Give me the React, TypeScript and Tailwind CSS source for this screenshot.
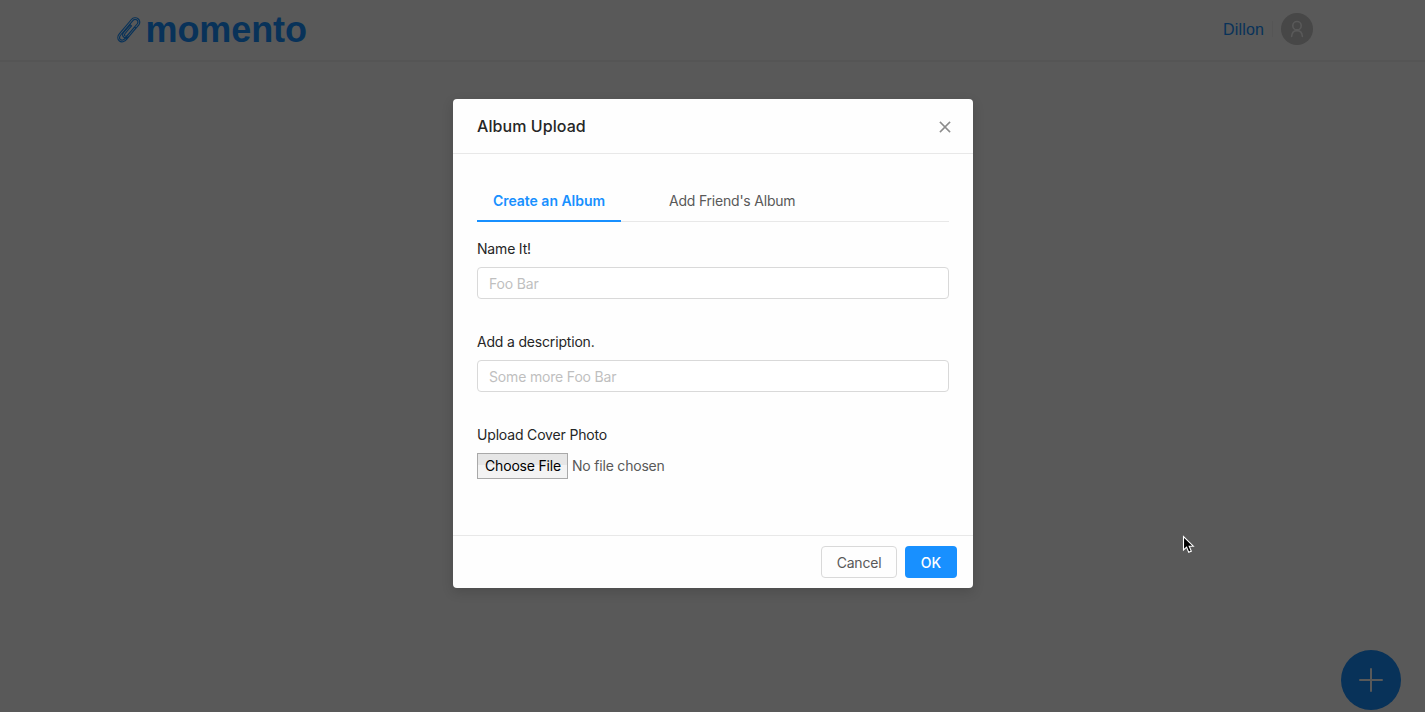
import { AiOutlineClose } from "react-icons/ai";

function PaperClip() {
  return (
    <svg width="24" height="26" viewBox="0 0 24 26" fill="none" stroke="currentColor" strokeWidth="1.15" strokeLinecap="round" strokeLinejoin="round">
      <path d="M18.9 11.2 L9.8 22.2 C7.8 25 4.2 25.6 2.2 23.8 C0.3 22 0.5 19 2.3 16.9 L14.4 2.5 C16.2 0.4 19.2 0.3 21.1 1.8 C23.1 3.4 23.3 6.1 21.6 8.2 L11.9 19.5 C10.4 21.1 8.4 21.4 6.9 20.2 C5.3 18.9 5.4 17 6.7 15.4 L13.3 7.8 L14.5 8.9 L8.1 16.5 C7.4 17.5 7.3 18.3 8 18.9 C8.8 19.5 9.7 19.2 10.4 18.4 L20.1 7 C21.1 5.7 21.1 4.1 20 3.1 C18.8 2.1 17 2.4 15.9 3.6 L3.7 18 C2.4 19.6 2.2 21.4 3.4 22.5 C4.8 23.7 7 23 8.3 21.2 L17.7 10 Z" />
    </svg>
  );
}

function UserIcon() {
  return (
    <svg width="18" height="18" viewBox="0 0 18 18" fill="none" stroke="currentColor" strokeWidth="1.6" strokeLinecap="round">
      <circle cx="9" cy="5.7" r="4.2" />
      <path d="M3.6 16.5 C3.8 12.7 6 10.6 9 10.6 C12 10.6 14.2 12.7 14.4 16.5" />
    </svg>
  );
}

function Field({ label, placeholder }: { label: string; placeholder: string }) {
  return (
    <label className="block h-[93px]">
      <span className="block h-[30px] pl-[0.5px] text-sm leading-[22px] tracking-[-0.18px] text-[#262626]">{label}</span>
      <input
        placeholder={placeholder}
        className="-mt-px block h-8 w-full rounded border border-[#d9d9d9] bg-white px-[11.5px] text-sm tracking-[-0.17px] outline-none placeholder:text-[#bfbfbf]"
      />
    </label>
  );
}

function UploadDialog() {
  return (
    <section role="dialog" className="flex h-[489px] w-[520px] flex-col rounded bg-[#fefefe] shadow-[0_4px_12px_rgba(0,0,0,0.15)]">
      <header className="flex h-[55px] shrink-0 items-center justify-between border-b border-[#e8e8e8] pr-5 pl-[24.5px]">
        <h2 className="text-base leading-[22px] font-medium tracking-[0.07px] text-[#262626]">Album Upload</h2>
        <button aria-label="Close" className="pt-0.5 text-[#8c8c8c]">
          <AiOutlineClose size={16} stroke="currentColor" strokeWidth={24} />
        </button>
      </header>
      <div className="flex-1 px-6 pt-7">
        <nav className="flex h-10 gap-8 border-b border-[#e8e8e8] text-sm leading-[38px]">
          <button className="h-10 w-36 border-b-2 border-[#1890ff] pl-px font-semibold tracking-[-0.02px] text-[#1890ff]">Create an Album</button>
          <button className="h-10 pb-0.5 pl-[16.5px] tracking-[-0.21px] text-[#595959]">Add Friend's Album</button>
        </nav>
        <div className="pt-4">
          <Field label="Name It!" placeholder="Foo Bar" />
          <Field label="Add a description." placeholder="Some more Foo Bar" />
          <div className="pl-[0.5px] text-sm leading-[22px] tracking-[-0.17px] text-[#262626]">Upload Cover Photo</div>
          <div className="mt-[7px] flex items-center gap-[4.5px] text-sm tracking-[-0.2px]">
            <button className="h-[26px] w-[91px] border border-[#a9a9a9] bg-linear-to-b from-[#e6e6e6] from-45% to-[#f3f3f3] to-45% pl-0.5 whitespace-nowrap text-black">Choose File</button>
            <span className="text-[#595959]">No file chosen</span>
          </div>
        </div>
      </div>
      <footer className="flex h-[53px] shrink-0 items-center justify-end gap-2 border-t border-[#e8e8e8] px-4 text-sm">
        <button className="h-8 w-[76px] rounded border border-[#d9d9d9] pt-0.5 pl-px tracking-[-0.2px] text-[#595959]">Cancel</button>
        <button className="h-8 w-[52px] rounded bg-[#1890ff] pt-0.5 pl-px font-medium text-white">OK</button>
      </footer>
    </section>
  );
}

export default function App() {
  return (
    <div className="relative h-[712px] w-full overflow-hidden bg-[#595959] font-['Inter',sans-serif]">
      <header className="flex h-[62px] items-start justify-between border-b-2 border-[#555555] pr-28 pl-[116.5px]">
        <div className="flex items-center gap-[5px] pt-2 text-[#083259]">
          <span className="-mt-px"><PaperClip /></span>
          <span className="font-['Liberation_Sans',sans-serif] text-[36px] leading-[44px] font-bold tracking-[-0.1px]">momento</span>
        </div>
        <div className="flex items-center pt-[13px]">
          <span className="pt-0.5 font-['Liberation_Sans',sans-serif] text-base tracking-[0.15px] text-[#083259]">Dillon</span>
          <span className="ml-2 h-4 w-px bg-[#555555]" />
          <span className="ml-2 flex size-8 items-center justify-center rounded-full bg-[#474747] text-[#595959]">
            <UserIcon />
          </span>
        </div>
      </header>
      <main className="flex justify-center pt-[37px]">
        <UploadDialog />
      </main>
      <button aria-label="Add album" className="absolute top-[650px] left-[1341px] flex size-[60px] items-center justify-center rounded-full bg-[#083259] text-[#595959]">
        <svg width="24" height="24" viewBox="0 0 24 24" stroke="currentColor" strokeWidth="2" strokeLinecap="round">
          <path d="M12 1 V23 M1 12 H23" />
        </svg>
      </button>
      <svg className="absolute top-[535px] left-[1182px]" width="14" height="20" viewBox="0 0 14 20">
        <path d="M1.5 1.5 V15 L4.6 12.1 L6.7 17.2 L9.3 16.1 L7.2 11.2 H11.3 Z" fill="#000" stroke="#fff" strokeWidth="1.1" />
      </svg>
    </div>
  );
}
